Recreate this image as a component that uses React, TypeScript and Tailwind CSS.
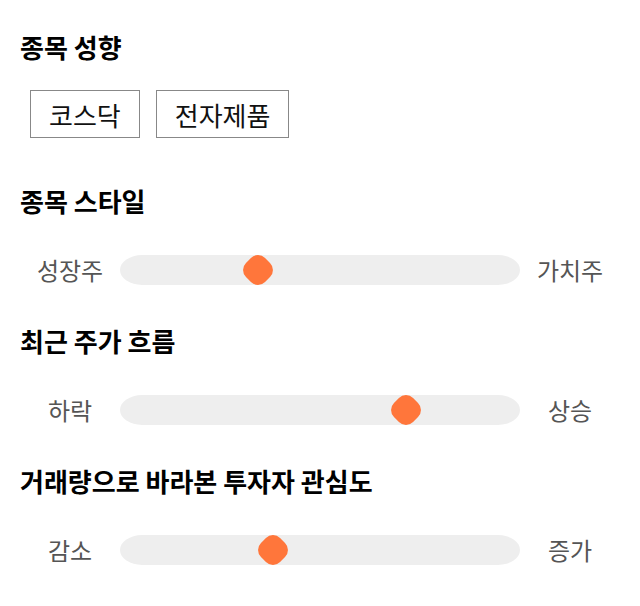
import React from 'react';

const font = { fontFamily: '"Noto Sans CJK KR", "Noto Sans", sans-serif' };

type SliderProps = { left: string; right: string; value: number };

function RangeRow({ left, right, value }: SliderProps) {
  return (
    <div className="flex items-center h-[30px] px-5">
      <div className="w-[100px] text-center text-2xl text-[#555]">{left}</div>
      <div className="relative w-[400px] h-[30px] bg-[#eeeeee] rounded-[22px/15px]">
        <div
          className="absolute top-1/2 -translate-x-1/2 -translate-y-1/2"
          style={{ left: `${value}%` }}
        >
          <div className="w-[27px] h-[27px] rotate-45 rounded-[10px] bg-[#ff763b]" />
        </div>
      </div>
      <div className="w-[100px] text-center text-2xl text-[#555]">{right}</div>
    </div>
  );
}

const sliders = [
  { title: '종목 스타일', left: '성장주', right: '가치주', value: 34.5 },
  { title: '최근 주가 흐름', left: '하락', right: '상승', value: 71.4 },
  { title: '거래량으로 바라본 투자자 관심도', left: '감소', right: '증가', value: 38.3 },
];

export default function App() {
  return (
    <div className="w-[640px] h-[606px] bg-white text-black" style={font}>
      <div className="pt-[29px]">
        <h2 className="px-5 text-[26px] font-bold leading-9">종목 성향</h2>
        <div className="flex gap-4 pl-[30px] mt-[25px]">
          {['코스닥', '전자제품'].map((tag) => (
            <div
              key={tag}
              className="h-12 px-[18px] flex items-center border border-[#888] text-[26px] text-[#111]"
            >
              {tag}
            </div>
          ))}
        </div>
        <div className="flex flex-col gap-[38px] mt-[45px]">
          {sliders.map((s) => (
            <div key={s.title}>
              <h2 className="px-5 text-[26px] font-bold leading-9">{s.title}</h2>
              <div className="mt-9">
                <RangeRow left={s.left} right={s.right} value={s.value} />
              </div>
            </div>
          ))}
        </div>
      </div>
    </div>
  );
}
